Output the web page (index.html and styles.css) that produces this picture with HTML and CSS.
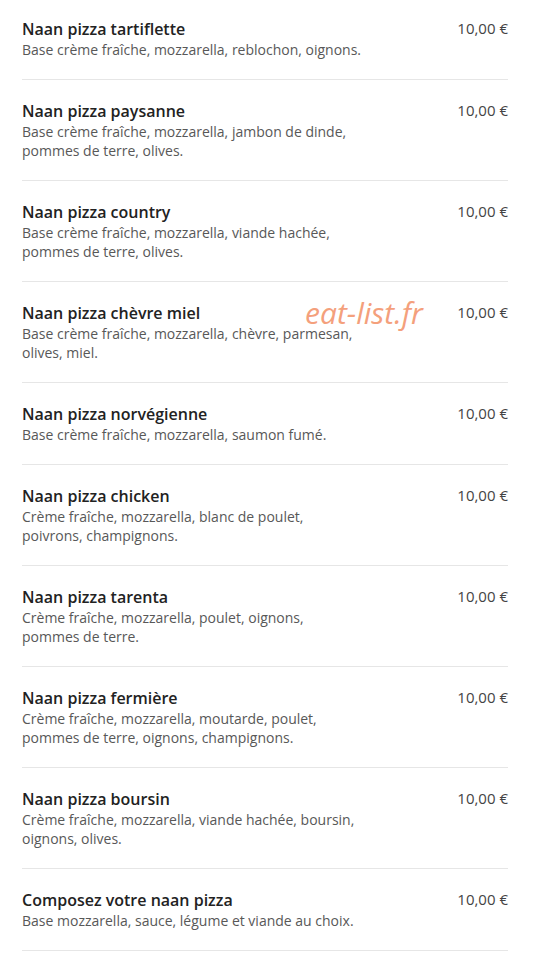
FILE: index.html
```html
<!DOCTYPE html>
<html lang="fr">
<head>
    <meta charset="UTF-8">
    <meta name="viewport" content="width=device-width, initial-scale=1.0">
    <title>Naan pizzas</title>
    <link rel="stylesheet" href="styles.css">
</head>
<body>

<div class="menu">
    <div class="item">
        <div class="info">
            <div class="name">Naan pizza tartiflette</div>
            <div class="desc">Base crème fraîche, mozzarella, reblochon, oignons.</div>
        </div>
        <div class="price">10,00 €</div>
    </div>

    <div class="item">
        <div class="info">
            <div class="name">Naan pizza paysanne</div>
            <div class="desc">Base crème fraîche, mozzarella, jambon de dinde, pommes de terre, olives.</div>
        </div>
        <div class="price">10,00 €</div>
    </div>

    <div class="item">
        <div class="info">
            <div class="name">Naan pizza country</div>
            <div class="desc">Base crème fraîche, mozzarella, viande hachée, pommes de terre, olives.</div>
        </div>
        <div class="price">10,00 €</div>
    </div>

    <div class="item">
        <div class="info">
            <div class="name">Naan pizza chèvre miel</div>
            <div class="desc">Base crème fraîche, mozzarella, chèvre, parmesan, olives, miel.</div>
        </div>
        <div class="price">10,00 €</div>
        <span class="watermark">eat-list.fr</span>
    </div>

    <div class="item">
        <div class="info">
            <div class="name">Naan pizza norvégienne</div>
            <div class="desc">Base crème fraîche, mozzarella, saumon fumé.</div>
        </div>
        <div class="price">10,00 €</div>
    </div>

    <div class="item">
        <div class="info">
            <div class="name">Naan pizza chicken</div>
            <div class="desc">Crème fraîche, mozzarella, blanc de poulet, poivrons, champignons.</div>
        </div>
        <div class="price">10,00 €</div>
    </div>

    <div class="item">
        <div class="info">
            <div class="name">Naan pizza tarenta</div>
            <div class="desc">Crème fraîche, mozzarella, poulet, oignons, pommes de terre.</div>
        </div>
        <div class="price">10,00 €</div>
    </div>

    <div class="item">
        <div class="info">
            <div class="name">Naan pizza fermière</div>
            <div class="desc">Crème fraîche, mozzarella, moutarde, poulet, pommes de terre, oignons, champignons.</div>
        </div>
        <div class="price">10,00 €</div>
    </div>

    <div class="item">
        <div class="info">
            <div class="name">Naan pizza boursin</div>
            <div class="desc">Crème fraîche, mozzarella, viande hachée, boursin, oignons, olives.</div>
        </div>
        <div class="price">10,00 €</div>
    </div>

    <div class="item">
        <div class="info">
            <div class="name">Composez votre naan pizza</div>
            <div class="desc">Base mozzarella, sauce, légume et viande au choix.</div>
        </div>
        <div class="price">10,00 €</div>
    </div>
</div>

</body>
</html>
```

FILE: styles.css
```css
body {
    margin: 0;
    background-color: #fff;
    font-family: "Open Sans", "Liberation Sans", sans-serif;
}
.menu {
    margin: -2px 36px 0 22px;
}
.item {
    position: relative;
    display: flex;
    justify-content: space-between;
    align-items: flex-start;
    padding: 20px 0;
    border-bottom: 1px solid #e6e6e6;
}
.info {
    max-width: 340px;
}
.name {
    font-size: 16px;
    font-weight: 600;
    line-height: 22px;
    color: #222;
}
.desc {
    font-size: 14px;
    line-height: 19px;
    color: #585858;
}
.price {
    font-size: 15px;
    line-height: 20px;
    color: #444;
    white-space: nowrap;
}
.watermark {
    position: absolute;
    left: 283px;
    top: 10px;
    font-size: 30px;
    font-style: italic;
    font-weight: 400;
    color: #f4a07c;
}
```
